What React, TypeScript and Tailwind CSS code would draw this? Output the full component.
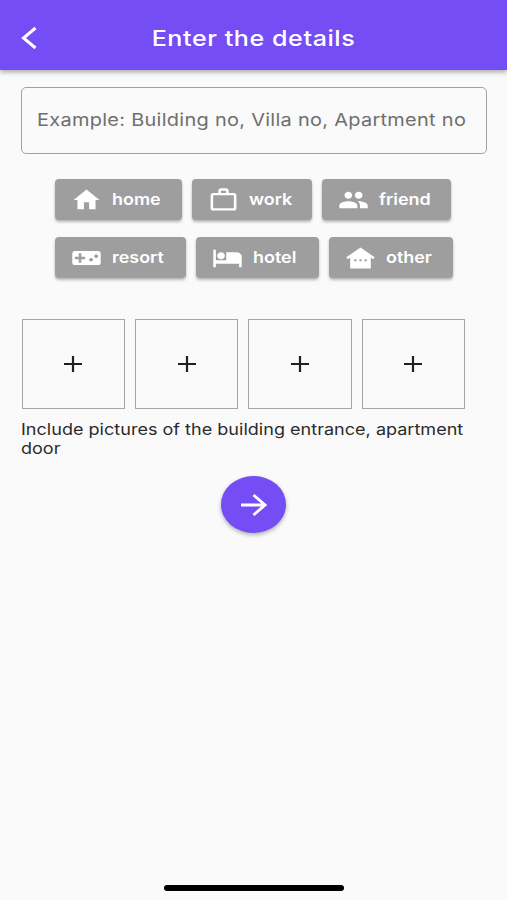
import type { ReactNode } from 'react';

type Place = {
  label: string;
  width: string;
  icon: ReactNode;
};

const rows: Place[][] = [
  [
    { label: 'home', width: 'w-[127px]', icon: <path d="M10 20v-6h4v6h5v-8h3L12 3 2 12h3v8z" /> },
    {
      label: 'work',
      width: 'w-[120px]',
      icon: (
        <path
          fillRule="evenodd"
          d="M14 6V4h-4v2h4zM4 8v11h16V8H4zm16-2c1.11 0 2 .89 2 2v11c0 1.11-.89 2-2 2H4c-1.11 0-2-.89-2-2l.01-11c0-1.11.88-2 1.99-2h4V4c0-1.11.89-2 2-2h4c1.11 0 2 .89 2 2v2h4z"
        />
      ),
    },
    {
      label: 'friend',
      width: 'w-[129px]',
      icon: (
        <path d="M16 11c1.66 0 2.99-1.34 2.99-3S17.66 5 16 5c-1.66 0-3 1.34-3 3s1.34 3 3 3zm-8 0c1.66 0 2.99-1.34 2.99-3S9.66 5 8 5C6.34 5 5 6.34 5 8s1.34 3 3 3zm0 2c-2.33 0-7 1.17-7 3.5V19h14v-2.5c0-2.33-4.67-3.5-7-3.5zm8 0c-.29 0-.62.02-.97.05 1.16.84 1.97 1.97 1.97 3.45V19h6v-2.5c0-2.33-4.67-3.5-7-3.5z" />
      ),
    },
  ],
  [
    {
      label: 'resort',
      width: 'w-[131px]',
      icon: (
        <path d="M21 6H3c-1.1 0-2 .9-2 2v8c0 1.1.9 2 2 2h18c1.1 0 2-.9 2-2V8c0-1.1-.9-2-2-2zm-10 7H8v3H6v-3H3v-2h3V8h2v3h3v2zm4.5 2c-.83 0-1.5-.67-1.5-1.5s.67-1.5 1.5-1.5 1.5.67 1.5 1.5-.67 1.5-1.5 1.5zm4-3c-.83 0-1.5-.67-1.5-1.5S18.67 9 19.5 9s1.5.67 1.5 1.5-.67 1.5-1.5 1.5z" />
      ),
    },
    {
      label: 'hotel',
      width: 'w-[123px]',
      icon: (
        <path d="M7 13c1.66 0 3-1.34 3-3S8.66 7 7 7s-3 1.34-3 3 1.34 3 3 3zm12-6h-8v7H3V5H1v15h2v-3h18v3h2v-9c0-2.21-1.79-4-4-4z" />
      ),
    },
    {
      label: 'other',
      width: 'w-[124px]',
      icon: (
        <path
          fillRule="evenodd"
          d="M12 3 1 11.4l1.21 1.59L4 11.62V21h16v-9.38l1.79 1.36L23 11.4 12 3zM8 15c-.55 0-1-.45-1-1s.45-1 1-1 1 .45 1 1-.45 1-1 1zm4 0c-.55 0-1-.45-1-1s.45-1 1-1 1 .45 1 1-.45 1-1 1zm4 0c-.55 0-1-.45-1-1s.45-1 1-1 1 .45 1 1-.45 1-1 1z"
        />
      ),
    },
  ],
];

function PlaceButton({ label, width, icon }: Place) {
  return (
    <button
      className={`${width} flex h-[41px] shrink-0 items-center gap-[10px] rounded-[4px] bg-[#9e9e9e] pl-[15.5px] text-white shadow-[0_2px_3px_rgba(0,0,0,0.28)]`}
    >
      <svg className="h-7 w-[31px] shrink-0" viewBox="0 0 24 24" preserveAspectRatio="none" fill="currentColor">
        {icon}
      </svg>
      <span className="origin-left scale-x-[1.12] pb-px text-[16px] leading-5 font-semibold">{label}</span>
    </button>
  );
}

export default function App() {
  return (
    <div className="flex h-[900px] w-[507px] flex-col overflow-hidden bg-[#fafafa] font-['Inter',sans-serif]">
      {/* App bar */}
      <header className="grid h-[69.5px] shrink-0 grid-cols-[60px_1fr_60px] items-center bg-[#754df4] pt-[6px] text-white shadow-[0_2px_5px_rgba(0,0,0,0.35)]">
        <svg className="ml-[21px] h-6 w-[18px]" viewBox="0 0 18 24" fill="none" stroke="currentColor" strokeWidth="3">
          <path d="M14.5 2 2.5 12 14.5 22" />
        </svg>
        <h1 className="scale-x-[1.14] text-center text-[22px] leading-7 font-medium tracking-[0.5px] whitespace-nowrap">
          Enter the details
        </h1>
      </header>

      <main className="flex flex-1 flex-col pt-[17.5px] pl-[21px]">
        <div className="flex h-[67px] w-[466px] items-center rounded-[5px] border border-[#a2a2a2] pb-px pl-[15px]">
          <span className="origin-left scale-x-[1.14] text-[17.5px] tracking-[0.25px] whitespace-nowrap text-[#6f6f6f]">
            Example: Building no, Villa no, Apartment no
          </span>
        </div>

        {/* Place types */}
        <div className="mt-[25px] ml-[34px] flex flex-col gap-[17px]">
          {rows.map((row, i) => (
            <div key={i} className="flex gap-[10px]">
              {row.map((place) => (
                <PlaceButton key={place.label} {...place} />
              ))}
            </div>
          ))}
        </div>

        {/* Picture slots */}
        <div className="mt-[41px] ml-[0.5px] flex gap-[9.9px]">
          {[0, 1, 2, 3].map((i) => (
            <button key={i} className="flex h-[90px] w-[103.5px] items-center justify-center border border-[#a6a6a6]">
              <svg className="h-4 w-[18px]" viewBox="0 0 18 16" fill="none" stroke="#1f1f1f" strokeWidth="2.2">
                <path d="M0 8h18M9 0v16" />
              </svg>
            </button>
          ))}
        </div>

        <p className="mt-[11px] w-[400px] origin-left scale-x-[1.14] text-[15.8px] leading-[19px] tracking-[0.02px] text-[#2b2b2b]">
          Include pictures of the building entrance, apartment door
        </p>

        <button className="mt-[18px] ml-[200px] flex h-[57px] w-[65px] items-center justify-center rounded-[50%] bg-[#754df4] text-white shadow-[0_2px_4px_rgba(0,0,0,0.3)]">
          <svg className="h-6 w-7" viewBox="0 0 28 24" fill="none" stroke="currentColor" strokeWidth="2.9">
            <path d="M1 12h24M13.5 2 25 12 13.5 22" />
          </svg>
        </button>

        {/* Home indicator */}
        <div className="mt-auto mb-[9px] ml-[143px] h-[6px] w-[180px] rounded-full bg-black" />
      </main>
    </div>
  );
}
